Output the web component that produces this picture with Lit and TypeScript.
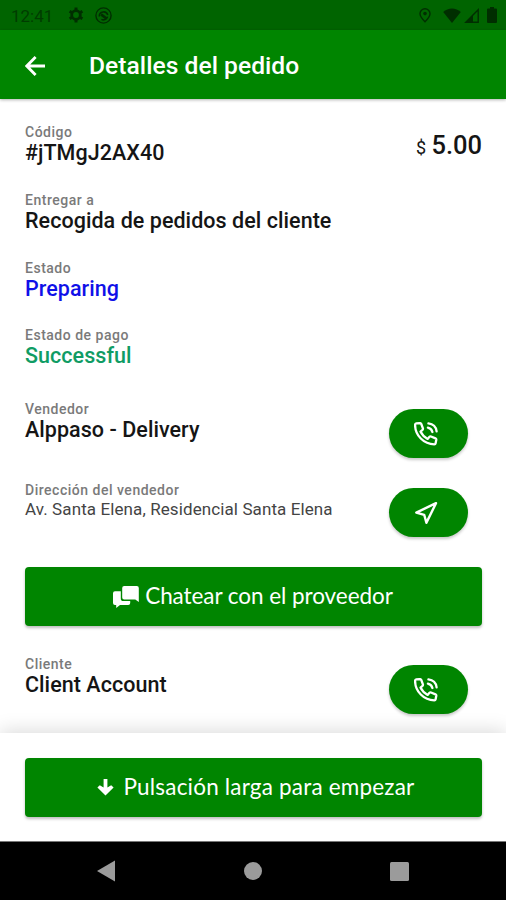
import { LitElement, html, css } from "lit";
import { customElement, property } from "lit/decorators.js";

const phoneIcon = html`<svg width="24" height="24" viewBox="0 0 24 24" fill="none" stroke="#fff" stroke-width="2.3" stroke-linecap="round" stroke-linejoin="round">
  <path d="M2.2 1.4L5.9 1.1C6.6 1.1 7 1.4 7.3 2L8.9 6.3C9.1 7 9 7.4 8.5 7.9L6.5 9.6C8 12.8 10.3 15.2 13.6 16.9L15.5 14.8C15.9 14.4 16.4 14.3 17 14.5L21.5 16.4C22.1 16.7 22.4 17.1 22.3 17.7L21.6 21.3C21.5 22 21 22.3 20.3 22.3C9.9 22.3 1.1 13.4 1.1 3C1.1 2 1.5 1.5 2.2 1.4Z"/>
  <path d="M14.4 1.4C19 1.9 22 5 22.6 9.3M13.9 5.6C16.4 6.2 17.8 7.6 18.4 10"/>
</svg>`;

const sendIcon = html`<svg width="24" height="24" viewBox="0 0 24 24" fill="none" stroke="#fff" stroke-width="2.4" stroke-linejoin="round">
  <path d="M22 2.2L2.3 11.6L10.2 13.8L12.4 21.8Z"/>
</svg>`;

const backIcon = html`<svg width="20" height="20" viewBox="0 0 20 20" fill="none" stroke="#fff" stroke-width="2.8">
  <path d="M20 10H2.2M10.6 1L1.8 10L10.6 19"/>
</svg>`;

const gearIcon = html`<svg width="16" height="16" viewBox="0 0 16 16" fill="none" stroke="currentColor">
  <circle cx="8" cy="8" r="4.3" stroke-width="2.8"/>
  <path d="M8 .6V3M8 13V15.4M1.6 4.3L3.7 5.5M12.3 10.5L14.4 11.7M1.6 11.7L3.7 10.5M12.3 5.5L14.4 4.3" stroke-width="3"/>
</svg>`;

const syncIcon = html`<svg width="17" height="17" viewBox="0 0 17 17" fill="none" stroke="currentColor">
  <circle cx="8.5" cy="8.5" r="7.6" stroke-width="1.4"/>
  <path d="M4.2 9.4A4.4 4.4 0 0 1 12.8 8M12.6 9.6A4.4 4.4 0 0 1 6.4 12.4" stroke-width="1.5"/>
  <path d="M6 7.4L11.6 11.6" stroke-width="2.6"/>
</svg>`;

const pinIcon = html`<svg width="12" height="15" viewBox="0 0 12 15" fill="none" stroke="currentColor" stroke-width="1.4">
  <path d="M6 13.8C3 10.6 1 8 1 5.7A5 5 0 0 1 11 5.7C11 8 9 10.6 6 13.8Z"/>
  <circle cx="6" cy="5.6" r="1.8" fill="currentColor" stroke="none"/>
</svg>`;

const wifiIcon = html`<svg width="18" height="15" viewBox="0 0 18 15" fill="currentColor">
  <path d="M9 15L.2 4C5-.8 13-.8 17.8 4Z"/>
</svg>`;

const signalIcon = html`<svg width="15" height="15" viewBox="0 0 15 15">
  <path d="M1.8 14.2H14.2V1.8Z" fill="none" stroke="currentColor" stroke-width="1.4"/>
  <path d="M1 14.8L9 6.8V14.8Z" fill="currentColor"/>
</svg>`;

const batteryIcon = html`<svg width="10" height="16" viewBox="0 0 10 16" fill="currentColor">
  <path d="M3 0H7V1.6H9A1 1 0 0 1 10 2.6V15A1 1 0 0 1 9 16H1A1 1 0 0 1 0 15V2.6A1 1 0 0 1 1 1.6H3Z"/>
</svg>`;

const chatIcon = html`<svg width="26" height="22" viewBox="0 0 26 22" fill="#fff">
  <path d="M11.2 0H23.8A2 2 0 0 1 25.8 2V16L22.3 13.6H11.2A2 2 0 0 1 9.2 11.6V2A2 2 0 0 1 11.2 0Z"/>
  <path d="M7.8 5.2V12.4A2.6 2.6 0 0 0 10.4 15H17.2V17A2 2 0 0 1 15.2 19H7L3.2 22V19H2A2 2 0 0 1 0 17V7.2A2 2 0 0 1 2 5.2Z"/>
</svg>`;

const downIcon = html`<svg width="17" height="17" viewBox="0 0 17 17" fill="#fff">
  <path d="M6.6 0H10.4V8.4L14.2 6.2L16.6 8.4L8.5 16.6L.4 8.4L2.8 6.2L6.6 8.4Z"/>
</svg>`;

@customElement("info-field")
class InfoField extends LitElement {
  @property() label = "";
  static styles = css`
    :host { display: flex; flex-direction: column; height: 42px; white-space: nowrap; }
    .label { height: 18px; line-height: 18px; font-size: 14px; font-weight: 500; letter-spacing: 0.51px; color: #7a7a7a; }
    .value { height: 24px; line-height: 24px; }
  `;
  render() {
    return html`<div class="label">${this.label}</div><div class="value"><slot></slot></div>`;
  }
}

@customElement("app-root")
class AppRoot extends LitElement {
  static styles = css`
    :host { display: flex; flex-direction: column; width: 506px; height: 900px; overflow: hidden; background: #fff; font-family: Roboto, "Liberation Sans", sans-serif; color: #151515; }
    svg { display: block; flex: none; }
    .status { flex: none; height: 30px; background: #006400; color: #002e00; display: flex; align-items: center; padding: 0 9px 0 11px; box-sizing: border-box; }
    .clock { font-size: 17px; width: 57px; line-height: 33px; height: 30px; color: #003c00; }
    .left { display: flex; gap: 11px; align-items: center; flex: 1; }
    .right { display: flex; align-items: center; }
    .wifi { margin: 0 3px 0 12px; }
    .battery { margin-left: 8px; }
    .bar { flex: none; height: 69px; background: #008500; display: flex; align-items: center; padding: 2px 0 0 25px; gap: 44px; box-shadow: 0 1px 3px rgba(0,0,0,.3); box-sizing: border-box; color: #fff; z-index: 1; }
    .title { font-size: 24.6px; font-weight: 500; letter-spacing: 0.04px; white-space: nowrap; }
    .body { flex: 1; display: flex; flex-direction: column; padding: 24px 24px 0 25px; min-height: 0; }
    .row { display: flex; justify-content: space-between; align-items: flex-start; flex: none; height: 68px; }
    .payment { margin-top: -1px; height: 69px; }
    .vendor { height: 86px; padding-top: 5px; box-sizing: border-box; }
    .vendor .pill { margin-top: 9px; }
    .address { height: 86px; }
    .address .pill { margin-top: 7px; }
    .client { margin-top: 29px; height: 60px; }
    .client .pill { margin-top: 10px; }
    .big { font-size: 21.5px; font-weight: 500; letter-spacing: 0.05px; }
    .small { display: block; font-size: 17px; line-height: 21px; letter-spacing: 0.1px; color: #444; }
    .blue { color: #1010e8; }
    .green { color: #109c64; }
    .price { font-size: 25.5px; font-weight: 500; line-height: 44px; white-space: nowrap; }
    .cur { font-size: 18px; font-weight: 400; margin-right: -1px; }
    .pill { width: 79px; height: 49px; border-radius: 25px; background: #008500; display: flex; align-items: center; justify-content: center; box-shadow: 0 2px 3px rgba(0,0,0,.22); margin-right: 14px; padding-right: 5px; box-sizing: border-box; flex: none; }
    .btn { flex: none; height: 59px; border-radius: 4px; background: #008500; color: #fff; display: flex; align-items: center; justify-content: center; font: 22.5px/59px Lato, sans-serif; box-shadow: 0 2px 3px rgba(0,0,0,.26); white-space: nowrap; }
    .btn span { height: 59px; line-height: 57px; }
    .chat { gap: 6px; letter-spacing: -0.06px; padding-right: 1px; box-sizing: border-box; }
    .start { gap: 10px; letter-spacing: 0.19px; padding-left: 4px; box-sizing: border-box; }
    .panel { flex: none; height: 108px; padding: 25px 24px 0 25px; box-sizing: border-box; background: #fff; box-shadow: 0 -2px 18px rgba(0,0,0,.15); z-index: 1; }
    .nav { flex: none; height: 59px; background: #000; border-top: 1px solid #777; box-sizing: border-box; display: flex; justify-content: space-between; align-items: center; padding: 0 97px; z-index: 1; }
  `;
  render() {
    return html`
      <div class="status">
        <span class="clock">12:41</span>
        <div class="left">${gearIcon}${syncIcon}</div>
        <div class="right">${pinIcon}<span class="wifi">${wifiIcon}</span>${signalIcon}<span class="battery">${batteryIcon}</span></div>
      </div>
      <div class="bar">${backIcon}<span class="title">Detalles del pedido</span></div>
      <div class="body">
        <div class="row"><info-field label="Código"><span class="big">#jTMgJ2AX40</span></info-field><div class="price"><span class="cur">$</span> 5.00</div></div>
        <div class="row"><info-field label="Entregar a"><span class="big">Recogida de pedidos del cliente</span></info-field></div>
        <div class="row"><info-field label="Estado"><span class="big blue">Preparing</span></info-field></div>
        <div class="row payment"><info-field label="Estado de pago"><span class="big green">Successful</span></info-field></div>
        <div class="row vendor"><info-field label="Vendedor"><span class="big">Alppaso - Delivery</span></info-field><div class="pill">${phoneIcon}</div></div>
        <div class="row address"><info-field label="Dirección del vendedor"><span class="small">Av. Santa Elena, Residencial Santa Elena</span></info-field><div class="pill">${sendIcon}</div></div>
        <div class="btn chat">${chatIcon}<span>Chatear con el proveedor</span></div>
        <div class="row client"><info-field label="Cliente"><span class="big">Client Account</span></info-field><div class="pill">${phoneIcon}</div></div>
      </div>
      <div class="panel"><div class="btn start">${downIcon}<span>Pulsación larga para empezar</span></div></div>
      <div class="nav">
        <svg width="18" height="22" viewBox="0 0 18 22" fill="#9b9b9b"><path d="M0 11L18 .6V21.4Z"/></svg>
        <svg width="18" height="18" viewBox="0 0 18 18" fill="#9b9b9b"><circle cx="9" cy="9" r="9"/></svg>
        <svg width="19" height="19" viewBox="0 0 19 19" fill="#9b9b9b"><rect width="19" height="19" rx="1.5"/></svg>
      </div>`;
  }
}
